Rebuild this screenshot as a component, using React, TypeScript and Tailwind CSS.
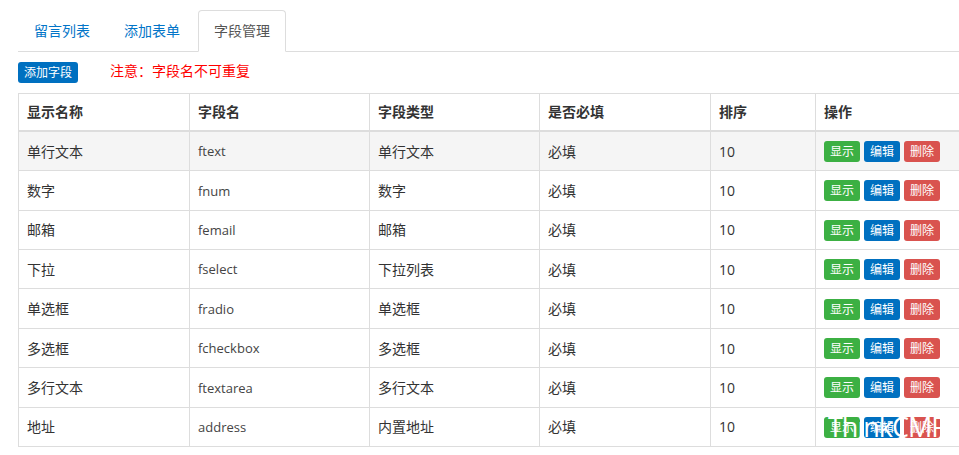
const tabs = ["留言列表", "添加表单"];

const columns = [
  { label: "显示名称", width: "w-[171px]" },
  { label: "字段名", width: "w-[180px]" },
  { label: "字段类型", width: "w-[170px]" },
  { label: "是否必填", width: "w-[171px]" },
  { label: "排序", width: "w-[105px]" },
  { label: "操作", width: "w-[170px]" },
];

const rows = [
  ["单行文本", "ftext", "单行文本"],
  ["数字", "fnum", "数字"],
  ["邮箱", "femail", "邮箱"],
  ["下拉", "fselect", "下拉列表"],
  ["单选框", "fradio", "单选框"],
  ["多选框", "fcheckbox", "多选框"],
  ["多行文本", "ftextarea", "多行文本"],
  ["地址", "address", "内置地址"],
];

const ActionButton = ({ label, className }: { label: string; className: string }) => (
  <button className={`h-[21px] w-9 rounded-[3px] text-xs leading-[21px] text-white ${className}`}>{label}</button>
);

export default function App() {
  return (
    <div className="relative h-[455px] w-[959px] overflow-hidden bg-white pl-[18px] pt-[10px] font-['Open_Sans','Noto_Sans_CJK_SC',sans-serif] text-sm text-[#333]">
      <div className="flex h-[42px] w-[1000px] gap-[2px] border-b border-[#ddd]">
        {tabs.map((tab) => (
          <a key={tab} className="flex h-[41px] w-[88px] items-center justify-center text-[#0275c8]">
            {tab}
          </a>
        ))}
        <a className="flex h-[42px] w-[88px] items-center justify-center rounded-t-[4px] border border-b-white border-[#ddd] bg-white text-[#555]">
          字段管理
        </a>
      </div>

      <div className="mt-[10px] flex h-[21px] items-center">
        <button className="h-[21px] w-[60px] rounded-[3px] bg-[#0070c0] text-xs leading-[21px] text-white">添加字段</button>
        <span className="mb-[3px] ml-8 text-[#ff0000]">注意：字段名不可重复</span>
      </div>

      <table className="mt-[10px] w-[967px] table-fixed border-collapse border border-[#ddd]">
        <thead>
          <tr className="h-[37.7px]">
            {columns.map((col) => (
              <th key={col.label} className={`${col.width} border border-b-2 border-[#ddd] px-2 text-left font-bold`}>
                {col.label}
              </th>
            ))}
          </tr>
        </thead>
        <tbody>
          {rows.map((row, i) => (
            <tr key={row[1]} className={i === 0 ? "h-[39.43px] bg-[#f5f5f5]" : "h-[39.43px]"}>
              {row.map((cell, j) => (
                <td key={j} className={j === 1 ? "border border-[#ddd] px-2 pt-[1px] text-[13px] text-[#444]" : "border border-[#ddd] px-2 pt-[1px]"}>
                  {cell}
                </td>
              ))}
              <td className="border border-[#ddd] px-2 pt-[1px]">必填</td>
              <td className="border border-[#ddd] px-2 pt-[1px]">10</td>
              <td className="border border-[#ddd] px-2">
                <div className="flex gap-1 pt-[1px]">
                  <ActionButton label="显示" className="bg-[#3cb043]" />
                  <ActionButton label="编辑" className="bg-[#0070c0]" />
                  <ActionButton label="删除" className="bg-[#d9534f]" />
                </div>
              </td>
            </tr>
          ))}
        </tbody>
      </table>

      <div className="absolute left-[828px] top-[409px] text-[27px] leading-[36px] tracking-[-1px] text-white">ThinkCMF</div>
    </div>
  );
}
